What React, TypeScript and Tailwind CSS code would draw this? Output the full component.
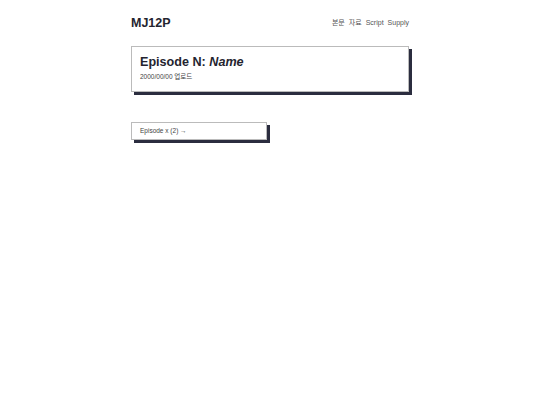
export default function App() {
  return (
    <div className="min-h-screen bg-white font-['Liberation_Sans','Noto_Sans_CJK_KR',sans-serif] text-[#24242f]">
      <div className="mx-auto w-[278px] pt-[15px]">
        <header className="flex items-center justify-between">
          <h1 className="text-[12.5px] font-bold leading-[16px]">MJ12P</h1>
          <nav className="-mt-[1px] flex gap-[4px] text-[7px] leading-[9px] text-[#555]">
            <span>본문</span>
            <span>자료</span>
            <span>Script</span>
            <span>Supply</span>
          </nav>
        </header>

        <div className="mt-[15px] border border-[#bbb] bg-white px-[8px] pt-[7px] pb-[10px] shadow-[3px_3px_0_#2b2d3f]">
          <h2 className="text-[12.6px] font-bold leading-[16px]">
            Episode N: <em>Name</em>
          </h2>
          <p className="mt-[3px] text-[6.5px] leading-[8px] text-[#444]">2000/00/00 업로드</p>
        </div>

        <div className="mt-[30px] w-[136px] border border-[#bbb] bg-white px-[8px] py-[4px] text-[6.5px] leading-[8px] text-[#444] shadow-[3px_3px_0_#2b2d3f]">
          Episode x (2) →
        </div>
      </div>
    </div>
  );
}
